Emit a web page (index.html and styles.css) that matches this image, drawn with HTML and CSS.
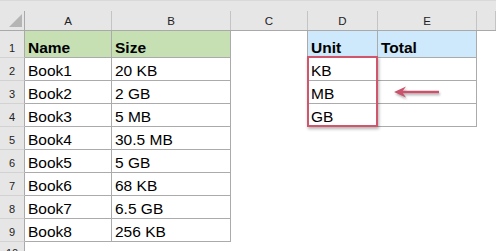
FILE: index.html
```html
<!DOCTYPE html>
<html lang="en">
<head>
    <meta charset="UTF-8">
    <meta name="viewport" content="width=device-width, initial-scale=1.0">
    <title>Size units</title>
    <link rel="stylesheet" href="styles.css">
</head>
<body>
    <div class="sheet">
        <div class="row colhead">
            <div class="corner"><span class="select-all"></span></div>
            <div class="col">A</div>
            <div class="col">B</div>
            <div class="col">C</div>
            <div class="col">D</div>
            <div class="col">E</div>
            <div class="col"></div>
        </div>

        <div class="row first">
            <div class="rh">1</div>
            <div class="c t bold green">Name</div>
            <div class="c t bold green">Size</div>
            <div class="c edge"></div>
            <div class="c t bold blue">Unit</div>
            <div class="c t bold blue">Total</div>
            <div class="c"></div>
        </div>
        <div class="row">
            <div class="rh">2</div>
            <div class="c t">Book1</div>
            <div class="c t">20 KB</div>
            <div class="c edge"></div>
            <div class="c t">KB</div>
            <div class="c t"></div>
            <div class="c"></div>
        </div>
        <div class="row">
            <div class="rh">3</div>
            <div class="c t">Book2</div>
            <div class="c t">2 GB</div>
            <div class="c edge"></div>
            <div class="c t">MB</div>
            <div class="c t"></div>
            <div class="c"></div>
        </div>
        <div class="row">
            <div class="rh">4</div>
            <div class="c t">Book3</div>
            <div class="c t">5 MB</div>
            <div class="c edge"></div>
            <div class="c t">GB</div>
            <div class="c t"></div>
            <div class="c"></div>
        </div>
        <div class="row">
            <div class="rh">5</div>
            <div class="c t">Book4</div>
            <div class="c t">30.5 MB</div>
        </div>
        <div class="row">
            <div class="rh">6</div>
            <div class="c t">Book5</div>
            <div class="c t">5 GB</div>
        </div>
        <div class="row">
            <div class="rh">7</div>
            <div class="c t">Book6</div>
            <div class="c t">68 KB</div>
        </div>
        <div class="row">
            <div class="rh">8</div>
            <div class="c t">Book7</div>
            <div class="c t">6.5 GB</div>
        </div>
        <div class="row">
            <div class="rh">9</div>
            <div class="c t">Book8</div>
            <div class="c t">256 KB</div>
        </div>
        <div class="row last">
            <div class="rh">10</div>
        </div>

        <!-- callout: box round D2:D4 and the arrow pointing at it -->
        <div class="callout-box"></div>
        <svg class="callout-arrow" width="56" height="20" viewBox="0 0 56 20">
            <line x1="8" y1="9" x2="47" y2="9" stroke="#c9536b" stroke-width="2.5"/>
            <path d="M2 9 L14 3.5 L10 9 L14 14.5 Z" fill="#c9536b"/>
        </svg>
    </div>
</body>
</html>
```

FILE: styles.css
```css
body {
    margin: 0;
    background: #fff;
    font-family: "Liberation Sans", Arial, sans-serif;
    overflow: hidden;
}
.sheet {
    position: relative;
    width: 496px;
    height: 251px;
    overflow: hidden;
}
.row {
    display: grid;
    grid-template-columns: 25px 87px 119px 77px 70px 99px 1fr;
    height: 23px;
}
.row.first {
    height: 27px;
}
.row.last {
    height: 10px;
    align-items: start;
}
.row.last .rh {
    height: 10px;
    align-items: flex-start;
    padding: 6px 0 0;
    line-height: 11px;
}

/* column letters */
.colhead {
    height: 31px;
    background: #e6e6e6;
    border-top: 1px solid #d9d9d9;
    border-bottom: 1px solid #a9a9a9;
    box-sizing: border-box;
    align-items: end;
}
.col {
    height: 19px;
    border-right: 1px solid #c4c4c4;
    font-size: 11.5px;
    line-height: 13px;
    color: #222;
    text-align: center;
    display: flex;
    align-items: flex-end;
    justify-content: center;
    padding-bottom: 2px;
    box-sizing: border-box;
}
.corner {
    height: 19px;
    border-right: 1px solid #a9a9a9;
    display: flex;
    justify-content: flex-end;
    align-items: flex-end;
    padding: 0 2px 3px 0;
    box-sizing: border-box;
}
.select-all {
    width: 13px;
    height: 13px;
    background: #b5b5b5;
    clip-path: polygon(100% 0, 100% 100%, 0 100%);
}

/* row numbers */
.rh {
    background: #e6e6e6;
    border-right: 1px solid #a9a9a9;
    border-bottom: 1px solid #d2d2d2;
    font-size: 11px;
    line-height: 13px;
    color: #222;
    display: flex;
    align-items: flex-end;
    justify-content: center;
    padding-bottom: 2px;
    box-sizing: border-box;
}

/* cells */
.c {
    font-size: 15.5px;
    line-height: 17px;
    color: #000;
    display: flex;
    align-items: flex-end;
    padding: 0 3px 1px;
    box-sizing: border-box;
    white-space: nowrap;
}
.t {
    border-right: 1px solid #ababab;
    border-bottom: 1px solid #ababab;
}
.edge {
    border-right: 1px solid #ababab;
}
.bold {
    font-weight: bold;
}
.green {
    background: #c6e0b4;
}
.blue {
    background: #cde9fb;
}

.callout-box {
    position: absolute;
    left: 307px;
    top: 56px;
    width: 71px;
    height: 71px;
    border: 2.5px solid #d0566c;
    box-sizing: border-box;
    box-shadow: 1px 2px 3px rgba(0, 0, 0, 0.3);
}
.callout-arrow {
    position: absolute;
    left: 392px;
    top: 83px;
    filter: drop-shadow(1px 2px 1px rgba(0, 0, 0, 0.3));
}
```
